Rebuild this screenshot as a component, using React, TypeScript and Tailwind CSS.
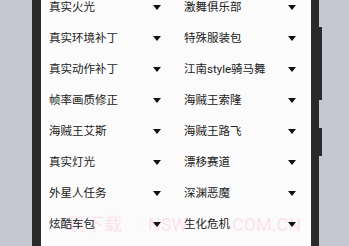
import { Fragment, ReactNode } from 'react'

const rows: [string, string][] = [
  ['真实火光', '激舞俱乐部'],
  ['真实环境补丁', '特殊服装包'],
  ['真实动作补丁', '江南style骑马舞'],
  ['帧率画质修正', '海贼王索隆'],
  ['海贼王艾斯', '海贼王路飞'],
  ['真实灯光', '漂移赛道'],
  ['外星人任务', '深渊恶魔'],
  ['炫酷车包', '生化危机'],
]

function Caret() {
  return (
    <svg width="8" height="5" viewBox="0 0 8 5" className="shrink-0">
      <path d="M0 0 H8 L4 5 Z" fill="#111" />
    </svg>
  )
}

function Cell({ children }: { children: ReactNode }) {
  return (
    <div className="flex items-center justify-between h-[31px] pl-[8px] pr-[15px]">
      <span className="text-[11.5px] leading-none text-[#222]">{children}</span>
      <Caret />
    </div>
  )
}

export default function App() {
  return (
    <div
      className="flex w-[349px] h-[246px] overflow-hidden bg-[#c6c7d1]"
      style={{ fontFamily: 'Roboto, "Noto Sans CJK SC", sans-serif' }}
    >
      <div className="w-[32px] shrink-0" />
      <div className="w-[9px] shrink-0 bg-[#2a2a2a]" />

      {/* Content */}
      <div className="relative w-[270px] shrink-0 bg-[#fbfbfb] overflow-hidden">
        {/* Watermark */}
        <div className="pointer-events-none absolute left-0 top-[213px] h-[24px] w-full text-[#fbe2ee] text-[18px] leading-[24px]">
          <span className="absolute left-[27px]">玩下载</span>
          <span className="absolute left-[93px]">·</span>
          <span className="absolute left-[107px]">NSW</span>
          <span className="absolute left-[191px]">COM.CN</span>
        </div>

        <div className="relative z-10 grid grid-cols-2 mt-[-8px]">
          {rows.map(([a, b]) => (
            <Fragment key={a}>
              <Cell>{a}</Cell>
              <Cell>{b}</Cell>
            </Fragment>
          ))}
        </div>
      </div>

      <div className="w-[8px] shrink-0 bg-[#2a2a2a]" />
      <div className="w-[3px] shrink-0 flex flex-col">
        <div className="h-[27px]" />
        <div className="h-[73px] bg-[#2a2a2a]" />
        <div className="h-[28px]" />
        <div className="h-[28px] bg-[#2a2a2a]" />
      </div>
    </div>
  )
}
